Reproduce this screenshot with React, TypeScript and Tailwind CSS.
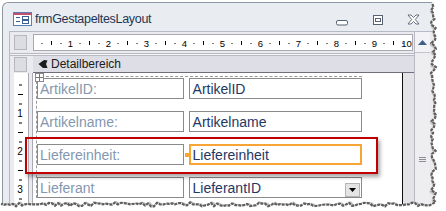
import React from 'react';

// deterministic jitter for the torn paper edge
const rnd = (seed: number) => {
    const x = Math.sin(seed * 12.9898 + 78.233) * 43758.5453;
    return x - Math.floor(x);
};

const tornPoints = () => {
    const pts: [number, number][] = [];
    for (let y = 4; y <= 202; y += 3) pts.push([431 + rnd(y) * 5, y]);
    for (let x = 430; x >= 0; x -= 3) pts.push([x, 202.5 + rnd(x + 900) * 4]);
    return pts;
};

const TornEdge = () => {
    const pts = tornPoints();
    const line = pts.map(([x, y]) => `${x.toFixed(1)},${y.toFixed(1)}`).join(' ');
    const outside = `M432,0 L${line} L0,211 L446,211 L446,0 Z`;
    return (
        <svg className="absolute inset-0 pointer-events-none" width={446} height={211}>
            <polyline points={line} fill="none" stroke="#c4c4c4" strokeWidth={5} transform="translate(1.5,1.5)" />
            <path d={outside} fill="#ffffff" />
            <polyline points={line} fill="none" stroke="#5e5e5e" strokeWidth={2.2} strokeDasharray="3 1" />
        </svg>
    );
};

// Access form icon in the title bar
const FormIcon = () => (
    <svg width={19} height={14} viewBox="0 0 19 14">
        <rect x={0.5} y={0.5} width={18} height={13} fill="#ffffff" stroke="#5b7fb0" />
        <rect x={1} y={1} width={17} height={2} fill="#c24f6b" />
        <rect x={3} y={5} width={4} height={1} fill="#3c5f96" />
        <rect x={3} y={9} width={4} height={1} fill="#3c5f96" />
        <rect x={9.5} y={4.5} width={6} height={3} fill="none" stroke="#3c5f96" />
        <rect x={9.5} y={8.5} width={6} height={3} fill="none" stroke="#3c5f96" />
    </svg>
);

const WindowControls = () => (
    <div className="flex items-center h-full">
        {/* minimize */}
        <svg width={12} height={6} className="mt-[8px]">
            <rect x={0.5} y={0.5} width={11} height={4.5} rx={1.5} fill="#ffffff" stroke="#586271" />
        </svg>
        {/* restore */}
        <svg width={10} height={10} className="ml-[25px] mt-[1px]">
            <rect x={0.5} y={0.5} width={9} height={9} fill="#ffffff" stroke="#586271" />
            <rect x={2.5} y={3.5} width={5} height={3} fill="none" stroke="#586271" />
        </svg>
        {/* close */}
        <svg width={13} height={11} className="ml-[24px] mt-[1px]">
            <path
                d="M1 1 L4 1 L6.5 3.5 L9 1 L12 1 L8.3 5.5 L12 10 L9 10 L6.5 7.5 L4 10 L1 10 L4.7 5.5 Z"
                fill="#ffffff"
                stroke="#586271"
                strokeWidth={0.9}
                strokeLinejoin="round"
            />
        </svg>
    </div>
);

// horizontal ruler, 38px per unit
const HRuler = () => {
    const marks: React.ReactNode[] = [];
    const o = -1.5;
    for (let n = 0; n <= 10; n++) {
        const x = o + n * 38;
        if (n > 0) {
            marks.push(
                <text key={`n${n}`} x={n === 10 ? x - 6 : x} y={11.5} fontSize={9.5} textAnchor="middle" fill="#000" fontFamily="'Liberation Sans', Arial, sans-serif">
                    {n}
                </text>
            );
        }
        if (n < 10) {
            marks.push(<rect key={`a${n}`} x={x + 9} y={8} width={1} height={1} fill="#000" />);
            marks.push(<rect key={`b${n}`} x={x + 18.5} y={6} width={1} height={4} fill="#000" />);
            marks.push(<rect key={`c${n}`} x={x + 28} y={8} width={1} height={1} fill="#000" />);
        }
    }
    return (
        <svg width={379} height={16} className="block">
            {marks}
        </svg>
    );
};

// vertical ruler beside the detail section
const VRuler = () => {
    const marks: React.ReactNode[] = [];
    const o = 2;
    for (let n = 0; n <= 3; n++) {
        const y = o + n * 38;
        if (n > 0) {
            marks.push(
                <text key={`n${n}`} x={6} y={y + 3.5} fontSize={10} textAnchor="middle" fill="#000" fontFamily="'Liberation Sans', Arial, sans-serif">
                    {n}
                </text>
            );
        }
        marks.push(<rect key={`a${n}`} x={5} y={y + 9.5} width={3} height={1} fill="#000" />);
        marks.push(<rect key={`b${n}`} x={4} y={y + 19} width={5} height={1} fill="#000" />);
        marks.push(<rect key={`c${n}`} x={5} y={y + 28.5} width={3} height={1} fill="#000" />);
    }
    return (
        <svg width={14} height={135} className="block">
            {marks}
        </svg>
    );
};

const Label = ({ text }: { text: string }) => (
    <div className="w-[147px] h-[21px] border border-[#8a8a8a] bg-white pl-[2px] flex items-center text-[14px] leading-none text-[#8497b0]">
        {text}
    </div>
);

const Field = ({ text, active, combo }: { text: string; active?: boolean; combo?: boolean }) => (
    <div
        className={
            active
                ? 'relative w-[174px] h-[21px] border-2 border-[#f7a535] bg-white pl-[2px] flex items-center text-[14px] leading-none text-[#1f3864]'
                : 'relative w-[174px] h-[21px] border border-[#8a8a8a] bg-white pl-[3px] flex items-center text-[14px] leading-none text-[#1f3864]'
        }
    >
        {text}
        {combo && (
            <div className="absolute right-[1px] top-[5px] w-[15px] h-[14px] bg-[#e4e4e4] border border-[#b5b5b5] flex items-center justify-center">
                <svg width={7} height={4}>
                    <path d="M0 0 L7 0 L3.5 4 Z" fill="#000" />
                </svg>
            </div>
        )}
        {active && <div className="absolute left-[-6px] top-[7px] w-[4px] h-[4px] bg-[#f7a535]" />}
    </div>
);

const App = () => {
    return (
        <div
            className="relative w-[446px] h-[211px] bg-white overflow-hidden"
            style={{ fontFamily: "'Liberation Sans', Arial, sans-serif" }}
        >
            <div className="ml-[2px] mt-[2px] w-[432px] h-[209px] border-l border-t border-[#8f99a6] rounded-tl-[6px] bg-[#e9edf2] flex flex-col">
                {/* title bar */}
                <div className="h-[28px] flex items-center pl-[10px] pr-[14px] pt-[4px]">
                    <FormIcon />
                    <span className="ml-[3px] text-[12.5px] tracking-[-0.3px] text-[#1e3553]">frmGestapeltesLayout</span>
                    <div className="ml-auto h-full">
                        <WindowControls />
                    </div>
                </div>

                {/* client area */}
                <div className="ml-[6px] flex border-l border-t border-[#b4bbc4] bg-[#ebebef] flex-1">
                    <div className="w-[404px] flex flex-col">
                        {/* ruler row */}
                        <div className="h-[21px] flex items-center">
                            <div className="w-[23px] h-full flex items-center pl-[4px]">
                                <div className="w-[13px] h-[15px] bg-[#dcdce3] border border-[#b7b7c0]" />
                            </div>
                            <div className="w-[380px] h-[17px] bg-white border border-[#a9a9b3] overflow-hidden">
                                <HRuler />
                            </div>
                        </div>
                        {/* separator */}
                        <div className="h-[3px] border-t border-b border-[#b9b9c2] bg-[#f4f4f6]" />
                        {/* section row */}
                        <div className="h-[17px] flex">
                            <div className="w-[23px] h-full pl-[4px] pt-[1px]">
                                <div className="w-[13px] h-[15px] bg-[#dcdce3] border border-[#b7b7c0]" />
                            </div>
                            <div className="flex-1 h-full bg-[#dedee6] border-b border-[#6f6f7c] flex items-center pl-[5px]">
                                <svg width={10} height={10}>
                                    <path d="M0.5 5 L6 1 L9.5 1.5 L8 5 L9.5 9 L5 9 Z" fill="#1c1c1c" />
                                </svg>
                                <span className="ml-[3px] text-[12px] leading-none text-[#202020]">Detailbereich</span>
                            </div>
                        </div>
                        {/* detail row */}
                        <div className="flex flex-1">
                            <div className="w-[23px] flex pl-[4px]">
                                <div className="w-[14px] bg-white">
                                    <VRuler />
                                </div>
                                <div className="w-[5px] border-l border-r border-[#a9a9b3] bg-[#ebebef]" />
                            </div>
                            <div className="w-[370px] bg-white border-r border-[#111] relative pt-[3px] pl-[3px]">
                                <div className="w-[326px] border-t border-dashed border-[#9a9a9a] border-l pt-[1px] flex flex-col gap-[12px]">
                                    <div className="flex gap-[5px]">
                                        <Label text="ArtikelID:" />
                                        <Field text="ArtikelID" />
                                    </div>
                                    <div className="flex gap-[5px]">
                                        <Label text="Artikelname:" />
                                        <Field text="Artikelname" />
                                    </div>
                                    <div className="flex gap-[5px]">
                                        <Label text="Liefereinheit:" />
                                        <Field text="Liefereinheit" active />
                                    </div>
                                    <div className="flex gap-[5px]">
                                        <Label text="Lieferant" />
                                        <Field text="LieferantID" combo />
                                    </div>
                                </div>
                                {/* layout move handle */}
                                <div className="absolute left-[2px] top-[0px] w-[9px] h-[9px] border border-[#8a8a8a] bg-white flex items-center justify-center">
                                    <svg width={7} height={7}>
                                        <path d="M3.5 0 V7 M0 3.5 H7" stroke="#777" strokeWidth={1} />
                                    </svg>
                                </div>
                            </div>
                            <div className="flex-1 bg-[#e4e4e8]" />
                        </div>
                    </div>

                    {/* vertical scrollbar */}
                    <div className="w-[16px] flex flex-col border-l border-[#b9b9c2] bg-[#eeeef1]">
                        <div className="h-[21px] flex items-center justify-center border-b border-[#c4c4cc] bg-[#f3f3f6]">
                            <svg width={9} height={5}>
                                <path d="M4.5 0 L9 5 L0 5 Z" fill="#3f5f8a" />
                            </svg>
                        </div>
                        <div className="flex-1 flex items-center justify-center pt-[56px]">
                            <svg width={7} height={6}>
                                <path d="M0 0.5 H7 M0 2.5 H7 M0 4.5 H7" stroke="#8d8d95" strokeWidth={1} />
                            </svg>
                        </div>
                    </div>
                </div>
            </div>

            {/* red highlight frame */}
            <div className="absolute left-[25px] top-[137px] w-[353px] h-[37px] border-2 border-[#c00000] shadow-[2px_3px_4px_rgba(0,0,0,0.35)]" />

            <TornEdge />
        </div>
    );
};

export default App;
